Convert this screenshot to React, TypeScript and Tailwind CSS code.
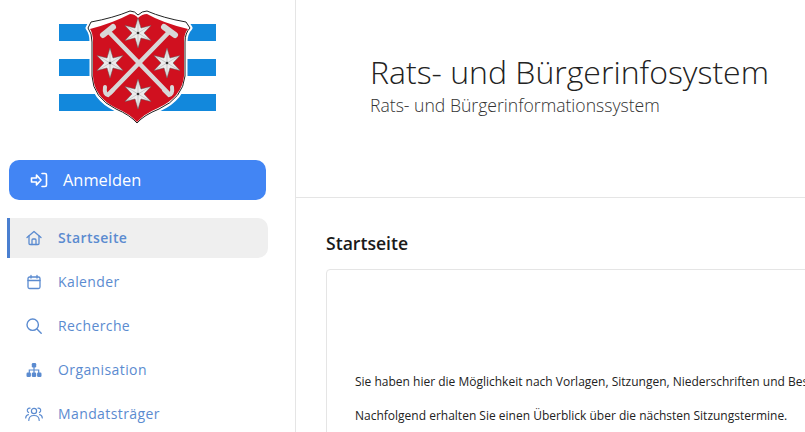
const Star = ({ x, y }: { x: number; y: number }) => (
  <g transform={`translate(${x} ${y})`}>
    <path
      d="M0 -15 L3 -5 L13 -7.5 L6 0 L13 7.5 L3 5 L0 15 L-3 5 L-13 7.5 L-6 0 L-13 -7.5 L-3 -5 Z"
      fill="#ececec"
      stroke="#5a5a5a"
      strokeWidth="0.5"
    />
    <path d="M0 -12 L0 12 M-10 -6 L10 6 M-10 6 L10 -6" stroke="#a8a8a8" strokeWidth="0.5" />
    <circle r="1.3" fill="#333" />
  </g>
);

const Crest = () => {
  const outer =
    "M30 28 L33 22 Q55 18 72 11 Q77 11 80 15 Q84 11 89 11 Q105 18 128 22 L132 28 Q127 33 127 42 L127 76 Q125 98 101 109 Q86 115 79 123 Q72 115 58 109 Q35 98 34 76 L34 42 Q34 33 30 28 Z";
  const red =
    "M32 29 Q55 23 72 14 Q77 14 80 18 Q84 14 89 14 Q105 23 130 29 Q126 33 126 42 L126 76 Q124 97 100 108 Q86 114 79 122 Q72 114 58 108 Q36 97 35 76 L35 42 Q35 33 32 29 Z";
  return (
    <svg width="158" height="124" viewBox="0 0 158 124" className="block">
      <g fill="#1288dc">
        <rect x="1" y="24" width="40" height="17" />
        <rect x="120" y="24" width="38" height="17" />
        <rect x="1" y="59" width="40" height="17" />
        <rect x="120" y="59" width="38" height="17" />
        <rect x="1" y="94" width="60" height="17" />
        <rect x="100" y="94" width="58" height="17" />
      </g>
      <path d={outer} fill="#fff" stroke="#fff" strokeWidth="5" strokeLinejoin="round" />
      <path d={outer} fill="#fff" stroke="#222" strokeWidth="1" />
      <path d={red} fill="#d0101f" />
      <g stroke="#d8d8d8" fill="none" strokeLinecap="round">
        <path d="M51 32 L110 93" strokeWidth="4.5" />
        <path d="M111 32 L52 93" strokeWidth="4.5" />
        <path d="M45 35 L55 27" strokeWidth="6" />
        <path d="M117 35 L106 27" strokeWidth="6" />
        <path d="M55 90 L50 95 Q46 94 47 87" strokeWidth="4" />
        <path d="M106 90 L111 95 Q115 94 114 87" strokeWidth="4" />
      </g>
      <Star x={80} y={33} />
      <Star x={52} y={63} />
      <Star x={109} y={63} />
      <Star x={80} y={94} />
    </svg>
  );
};

const LoginIcon = () => (
  <svg width="18" height="18" viewBox="0 0 18 18" fill="none" stroke="#fff" strokeWidth="1.6" strokeLinejoin="round" strokeLinecap="round">
    <path d="M1.5 7 H6.5 V4 L11 9 L6.5 14 V11 H1.5 Z" />
    <path d="M12 2.5 H15 Q16.5 2.5 16.5 4 V14 Q16.5 15.5 15 15.5 H12" />
  </svg>
);
const HomeIcon = () => (
  <svg width="16" height="16" viewBox="0 0 16 16" fill="none" stroke="currentColor" strokeWidth="1.3" strokeLinejoin="round" strokeLinecap="round">
    <path d="M1 7.5 L8 1.5 L15 7.5" />
    <path d="M3 6 V13.5 Q3 14.5 4 14.5 H12 Q13 14.5 13 13.5 V6" />
    <path d="M6 14.5 V10 Q6 9 7 9 H9 Q10 9 10 10 V14.5" />
  </svg>
);
const CalendarIcon = () => (
  <svg width="16" height="16" viewBox="0 0 16 16" fill="none" stroke="currentColor" strokeWidth="1.3" strokeLinejoin="round" strokeLinecap="round">
    <rect x="2" y="3" width="12" height="11.5" rx="1.5" />
    <path d="M2 6.5 H14 M5 1.5 V4 M11 1.5 V4" />
  </svg>
);
const SearchIcon = () => (
  <svg width="16" height="16" viewBox="0 0 16 16" fill="none" stroke="currentColor" strokeWidth="1.4" strokeLinecap="round">
    <circle cx="6.7" cy="6.7" r="5.7" />
    <path d="M11 11 L15.2 15.2" />
  </svg>
);
const OrgIcon = () => (
  <svg width="16" height="16" viewBox="0 0 16 16" fill="currentColor">
    <rect x="5.8" y="1" width="4.4" height="4.4" rx="1.2" />
    <rect x="0.5" y="10.5" width="4.4" height="4.4" rx="1.2" />
    <rect x="5.8" y="10.5" width="4.4" height="4.4" rx="1.2" />
    <rect x="11.1" y="10.5" width="4.4" height="4.4" rx="1.2" />
    <path d="M7.4 5 H8.6 V7.4 H13.3 V11 H12.1 V8.6 H8.6 V11 H7.4 V8.6 H3.9 V11 H2.7 V7.4 H7.4 Z" />
  </svg>
);
const UsersIcon = () => (
  <svg width="18" height="16" viewBox="0 0 18 16" fill="none" stroke="currentColor" strokeWidth="1.2" strokeLinecap="round">
    <circle cx="9" cy="5" r="2.6" />
    <path d="M3.8 14.5 C3.8 10.8 6 9.5 9 9.5 C12 9.5 14.2 10.8 14.2 14.5" />
    <path d="M5 2.2 C3 2 2 3.4 2.4 5 C2.6 5.7 3 6.2 3.6 6.5" />
    <path d="M13 2.2 C15 2 16 3.4 15.6 5 C15.4 5.7 15 6.2 14.4 6.5" />
    <path d="M0.7 12 C0.9 10 2 8.8 3.4 8.6" />
    <path d="M17.3 12 C17.1 10 16 8.8 14.6 8.6" />
  </svg>
);

const items = [
  { label: "Startseite", Icon: HomeIcon, active: true },
  { label: "Kalender", Icon: CalendarIcon, active: false },
  { label: "Recherche", Icon: SearchIcon, active: false },
  { label: "Organisation", Icon: OrgIcon, active: false },
  { label: "Mandatsträger", Icon: UsersIcon, active: false },
];

export default function App() {
  return (
    <div className="flex h-[432px] w-[805px] overflow-hidden bg-white font-['Open_Sans',sans-serif]">
      <aside className="flex w-[296px] shrink-0 flex-col border-r border-[#e5e5e5]">
        <div className="h-[160px] shrink-0 pl-[58px]">
          <Crest />
        </div>
        <div className="pl-[9px]">
          <button className="flex h-[40px] w-[257px] items-center gap-[15px] rounded-[10px] bg-[#4285f4] pl-[21px] text-[16.4px] font-medium text-white">
            <LoginIcon />
            Anmelden
          </button>
        </div>
        <nav className="mt-[18px] flex flex-col gap-[4px] pl-[7px]">
          {items.map(({ label, Icon, active }) => (
            <div
              key={label}
              className={
                active
                  ? "flex h-[40px] w-[261px] shrink-0 items-center rounded-r-[10px] border-l-[3px] border-[#4a7fd0] bg-[#efefef] text-[14px] font-semibold text-[#5b8bd0]"
                  : "flex h-[40px] w-[261px] shrink-0 items-center border-l-[3px] border-transparent text-[14px] font-normal text-[#5b8bd0]"
              }
            >
              <span className="flex w-[48px] justify-center">
                <Icon />
              </span>
              <span className="-translate-y-px tracking-[0.4px]">{label}</span>
            </div>
          ))}
        </nav>
      </aside>
      <main className="min-w-0 flex-1">
        <header className="flex h-[198px] flex-col border-b border-[#e5e5e5] pl-[74px] pt-[52px]">
          <h1 className="whitespace-nowrap text-[32px] leading-[40px] font-light text-[#222]">Rats- und Bürgerinfosystem</h1>
          <p className="whitespace-nowrap text-[17.6px] leading-[26px] font-light text-[#333]">Rats- und Bürgerinformationssystem</p>
        </header>
        <section className="pl-[30px] pt-[32px]">
          <h2 className="text-[17.6px] leading-[26px] font-semibold text-[#1a1a1a]">Startseite</h2>
          <div className="mt-[13px] h-[200px] w-[600px] rounded-tl-[4px] border border-[#e5e5e5] pl-[28px] pt-[104px] text-[12px] text-[#222]">
            <p className="whitespace-nowrap leading-[16px]">
              Sie haben hier die Möglichkeit nach Vorlagen, Sitzungen, Niederschriften und Beschlüssen zu suchen.
            </p>
            <p className="mt-[18px] whitespace-nowrap leading-[16px]">
              Nachfolgend erhalten Sie einen Überblick über die nächsten Sitzungstermine.
            </p>
          </div>
        </section>
      </main>
    </div>
  );
}
